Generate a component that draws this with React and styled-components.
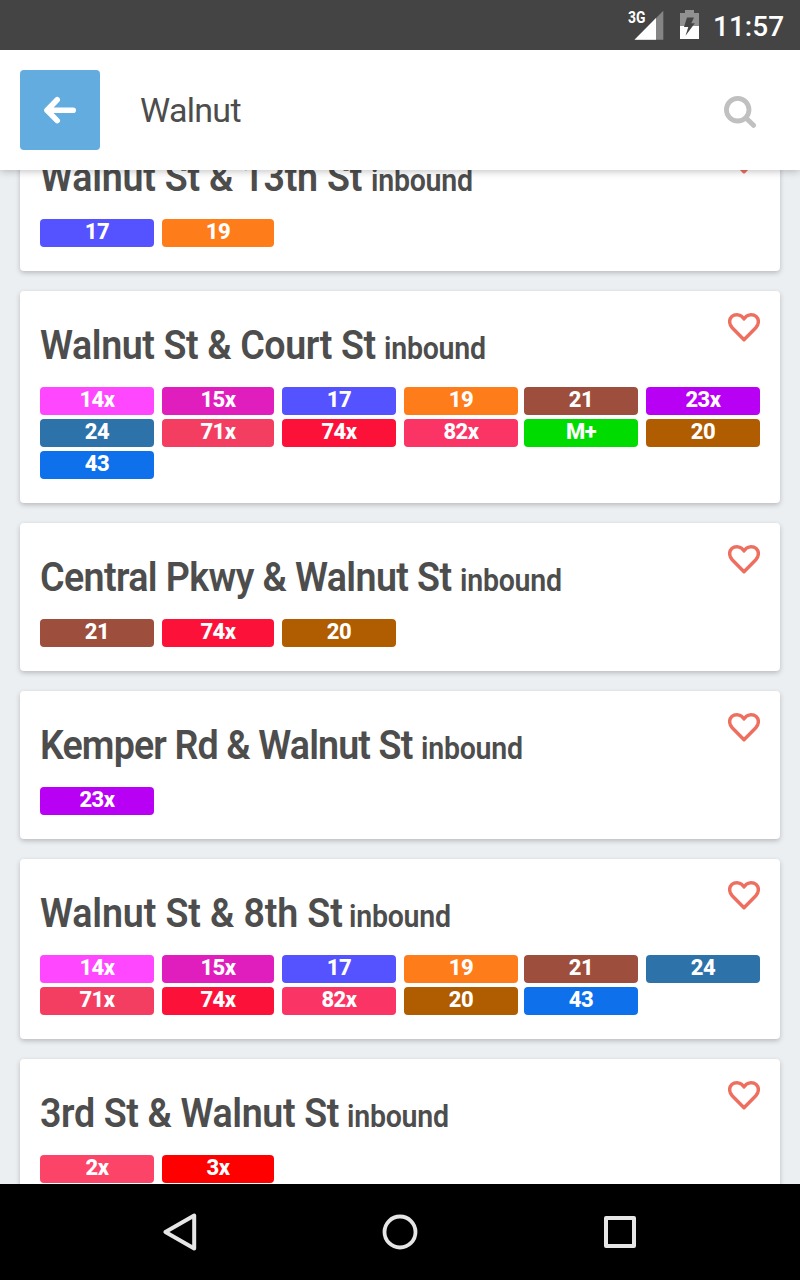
import React from "react";
import styled, { createGlobalStyle } from "styled-components";

const GlobalStyle = createGlobalStyle`
  * { box-sizing: border-box; }
  body { margin: 0; background: #eceff2; font-family: Roboto, "Liberation Sans", sans-serif; }
`;

const Screen = styled.div`
  display: flex;
  flex-direction: column;
  width: 800px;
  height: 1280px;
  overflow: hidden;
  background: #eceff2;
`;

const StatusBar = styled.div`
  display: flex;
  flex: 0 0 50px;
  height: 50px;
  min-height: 0;
  align-items: flex-start;
  justify-content: flex-end;
  padding-right: 16px;
  background: #444;
  color: #fff;
`;

const Clock = styled.span`
  width: 71px;
  height: 50px;
  margin-left: 13px;
  font-size: 28px;
  font-weight: 500;
  line-height: 53px;
  white-space: nowrap;
`;

const NetworkLabel = styled.span`
  width: 22px;
  margin-right: -16px;
  font-size: 16px;
  font-weight: 700;
  line-height: 36px;
  transform: scaleX(0.87);
  transform-origin: left;
  z-index: 1;
`;

const Header = styled.header`
  display: flex;
  flex: 0 0 120px;
  align-items: center;
  padding: 0 44px 0 20px;
  background: #fff;
  box-shadow: 0 1px 8px rgba(0, 0, 0, 0.26);
  clip-path: inset(0 0 -12px 0);
  z-index: 2;
`;

const BackButton = styled.button`
  display: flex;
  align-items: center;
  justify-content: center;
  width: 80px;
  height: 80px;
  padding: 0;
  border: 0;
  border-radius: 4px;
  background: #62acdf;
`;

const Query = styled.div`
  flex: 1;
  padding-left: 40px;
  color: #4d4d4d;
  font-size: 34px;
  line-height: 40px;
  letter-spacing: -0.7px;
`;

const StopList = styled.main`
  flex: 1;
  min-height: 0;
  overflow: hidden;
  padding: 0 20px;
`;

const Stops = styled.div`
  display: flex;
  flex-direction: column;
  gap: 20px;
  margin-top: -47px;
`;

const Card = styled.section`
  position: relative;
  padding: 20px 20px 24px;
  border-radius: 4px;
  background: #fff;
  box-shadow: 0 2px 5px rgba(0, 0, 0, 0.22);
`;

const Title = styled.h2`
  display: flex;
  align-items: baseline;
  height: 76px;
  margin: 0;
  padding-top: 11px;
  color: #4d4d4d;
  font-size: 40px;
  font-weight: 600;
  line-height: 48px;
  white-space: nowrap;
`;

const StopName = styled.span`
  width: ${(p) => p.$width}px;
  letter-spacing: ${(p) => p.$spacing}px;
  transform: scaleX(0.94);
  transform-origin: left;
`;

const Direction = styled.small`
  margin-left: 1.5px;
  font-size: 31px;
  font-weight: 600;
  letter-spacing: -0.25px;
  transform: scaleX(0.92);
  transform-origin: left;
`;

const Favorite = styled.svg`
  position: absolute;
  top: 21px;
  right: 20px;
`;

const Routes = styled.div`
  display: grid;
  grid-template-columns: 122px 120px 122px 120px 122px 114px;
  row-gap: 4px;
`;

const Route = styled.span`
  width: 114px;
  height: 28px;
  border-radius: 4px;
  background: ${(p) => p.$color};
  color: #fff;
  font-size: 22px;
  font-weight: 800;
  line-height: 25px;
  letter-spacing: -0.5px;
  text-align: center;

  &:nth-child(6n + 2) { width: 112px; }
`;

const NavBar = styled.nav`
  display: flex;
  flex: 0 0 96px;
  align-items: center;
  justify-content: center;
  gap: 180px;
  background: #000;
  z-index: 2;
`;

const ROUTE_COLORS = {
  "2x": "#fc4468",
  "3x": "#ff0000",
  "14x": "#ff47ff",
  "15x": "#e01dbd",
  "17": "#5552ff",
  "19": "#ff7c1a",
  "20": "#b05c00",
  "21": "#9d4e3c",
  "23x": "#b800f5",
  "24": "#2e72aa",
  "43": "#0f70eb",
  "71x": "#f43e61",
  "74x": "#fc1239",
  "82x": "#fa3464",
  "M+": "#00db00",
};

const STOPS = [
  { name: "Walnut St & 13th St", width: 329, spacing: -0.25, routes: ["17", "19"] },
  {
    name: "Walnut St & Court St", width: 342, spacing: -0.43,
    routes: ["14x", "15x", "17", "19", "21", "23x", "24", "71x", "74x", "82x", "M+", "20", "43"],
  },
  { name: "Central Pkwy & Walnut St", width: 418, spacing: -0.65, routes: ["21", "74x", "20"] },
  { name: "Kemper Rd & Walnut St", width: 379, spacing: -0.92, routes: ["23x"] },
  {
    name: "Walnut St & 8th St", width: 307, spacing: -0.14,
    routes: ["14x", "15x", "17", "19", "21", "24", "71x", "74x", "82x", "20", "43"],
  },
  { name: "3rd St & Walnut St", width: 305, spacing: -0.4, routes: ["2x", "3x"] },
];

function StopCard({ stop }) {
  return (
    <Card>
      <Title>
        <StopName $width={stop.width} $spacing={stop.spacing}>{stop.name}</StopName>
        <Direction>inbound</Direction>
      </Title>
      <Favorite width="32" height="30" viewBox="0 0 32 30" fill="none">
        <path
          d="M16 27.7 L4.2 15.7 C0.8 12.2 0.9 7.2 3.8 4.5 C7 1.8 13 1.9 16 7 C19 1.9 25 1.8 28.2 4.5 C31.1 7.2 31.2 12.2 27.8 15.7 Z"
          stroke="#ee6f60" strokeWidth="3.4" strokeLinejoin="round"
        />
      </Favorite>
      <Routes>
        {stop.routes.map((r) => <Route key={r} $color={ROUTE_COLORS[r]}>{r}</Route>)}
      </Routes>
    </Card>
  );
}

export default function App() {
  return (
    <Screen>
      <GlobalStyle />
      <StatusBar>
        <NetworkLabel>3G</NetworkLabel>
        <svg width="30" height="50" viewBox="634 0 30 50">
          <path d="M634.5 39.7 L663.3 10.7 V39.7 Z" fill="#858585" />
          <path d="M634.5 39.7 L656 18 V39.7 Z" fill="#fff" />
        </svg>
        <svg width="36" height="50" viewBox="664 0 36 50">
          <path d="M680 13 H685 V10 H694 V13 H699 V26 H680 Z" fill="#919191" />
          <path d="M680 26 H699 V39 H680 Z" fill="#fff" />
          <path d="M687 17.5 H694 L691.3 23.3 H694.8 L685.5 35.7 L688.3 27 H684 Z" fill="#444" />
        </svg>
        <Clock>11:57</Clock>
      </StatusBar>
      <Header>
        <BackButton aria-label="Back">
          <svg width="80" height="80" viewBox="0 0 80 80" fill="none" stroke="#fff" strokeWidth="5.6" strokeLinecap="round" strokeLinejoin="round">
            <path d="M37.2 29.8 L27 40.2 L37.2 50.6 M27 40.2 H53.2" />
          </svg>
        </BackButton>
        <Query>Walnut</Query>
        <svg width="32" height="36" viewBox="0 -2 32 36" fill="none" stroke="#c0c0c0" strokeLinecap="round">
          <circle cx="13.7" cy="15.7" r="11.3" strokeWidth="4.8" />
          <path d="M22.5 24.5 L29.5 31.3" strokeWidth="5" />
        </svg>
      </Header>
      <StopList>
        <Stops>
          {STOPS.map((s) => <StopCard key={s.name} stop={s} />)}
        </Stops>
      </StopList>
      <NavBar>
        <svg width="40" height="40" viewBox="0 0 40 40" fill="none" stroke="#e6e6e6" strokeWidth="4" strokeLinejoin="round">
          <path d="M34.2 3.6 V36.4 L5.4 20 Z" />
        </svg>
        <svg width="40" height="40" viewBox="0 0 40 40" fill="none" stroke="#e6e6e6" strokeWidth="3.8">
          <circle cx="20" cy="20" r="15.5" />
        </svg>
        <svg width="40" height="40" viewBox="0 0 40 40" fill="none" stroke="#e6e6e6" strokeWidth="4" strokeLinejoin="round">
          <rect x="6" y="6" width="28" height="28" />
        </svg>
      </NavBar>
    </Screen>
  );
}
